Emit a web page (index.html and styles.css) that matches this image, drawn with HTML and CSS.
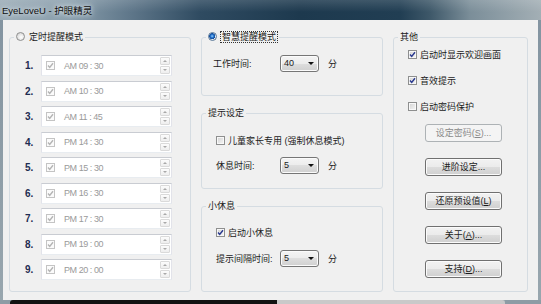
FILE: index.html
```html
<!DOCTYPE html>
<html lang="zh-CN">
<head>
    <meta charset="UTF-8">
    <title>EyeLoveU - 护眼精灵</title>
    <link rel="stylesheet" href="styles.css">
</head>
<body>
<div class="window">
    <div class="titlebar"><span class="title">EyeLoveU - 护眼精灵</span></div>

    <div class="client">
        <!-- 定时提醒模式 -->
        <fieldset class="group group-timer">
            <legend><span class="radio"></span>定时提醒模式</legend>
            <div class="group-body timer-list">
                <div class="timer-row"><span class="idx">1.</span><div class="spin"><span class="cb cb-off-gray"><svg viewBox="0 0 9 9"><path d="M2 4.6 L3.7 6.4 L7 2.2"/></svg></span><span class="time">AM 09 : 30</span><span class="spin-btns"><span class="spin-up"></span><span class="spin-down"></span></span></div></div>
                <div class="timer-row"><span class="idx">2.</span><div class="spin"><span class="cb cb-off-gray"><svg viewBox="0 0 9 9"><path d="M2 4.6 L3.7 6.4 L7 2.2"/></svg></span><span class="time">AM 10 : 30</span><span class="spin-btns"><span class="spin-up"></span><span class="spin-down"></span></span></div></div>
                <div class="timer-row"><span class="idx">3.</span><div class="spin"><span class="cb cb-off-gray"><svg viewBox="0 0 9 9"><path d="M2 4.6 L3.7 6.4 L7 2.2"/></svg></span><span class="time">AM 11 : 45</span><span class="spin-btns"><span class="spin-up"></span><span class="spin-down"></span></span></div></div>
                <div class="timer-row"><span class="idx">4.</span><div class="spin"><span class="cb cb-off-gray"><svg viewBox="0 0 9 9"><path d="M2 4.6 L3.7 6.4 L7 2.2"/></svg></span><span class="time">PM 14 : 30</span><span class="spin-btns"><span class="spin-up"></span><span class="spin-down"></span></span></div></div>
                <div class="timer-row"><span class="idx">5.</span><div class="spin"><span class="cb cb-off-gray"><svg viewBox="0 0 9 9"><path d="M2 4.6 L3.7 6.4 L7 2.2"/></svg></span><span class="time">PM 15 : 30</span><span class="spin-btns"><span class="spin-up"></span><span class="spin-down"></span></span></div></div>
                <div class="timer-row"><span class="idx">6.</span><div class="spin"><span class="cb cb-off-gray"><svg viewBox="0 0 9 9"><path d="M2 4.6 L3.7 6.4 L7 2.2"/></svg></span><span class="time">PM 16 : 30</span><span class="spin-btns"><span class="spin-up"></span><span class="spin-down"></span></span></div></div>
                <div class="timer-row"><span class="idx">7.</span><div class="spin"><span class="cb cb-off-gray"><svg viewBox="0 0 9 9"><path d="M2 4.6 L3.7 6.4 L7 2.2"/></svg></span><span class="time">PM 17 : 30</span><span class="spin-btns"><span class="spin-up"></span><span class="spin-down"></span></span></div></div>
                <div class="timer-row"><span class="idx">8.</span><div class="spin"><span class="cb cb-off-gray"><svg viewBox="0 0 9 9"><path d="M2 4.6 L3.7 6.4 L7 2.2"/></svg></span><span class="time">PM 19 : 00</span><span class="spin-btns"><span class="spin-up"></span><span class="spin-down"></span></span></div></div>
                <div class="timer-row"><span class="idx">9.</span><div class="spin"><span class="cb cb-off-gray"><svg viewBox="0 0 9 9"><path d="M2 4.6 L3.7 6.4 L7 2.2"/></svg></span><span class="time">PM 20 : 00</span><span class="spin-btns"><span class="spin-up"></span><span class="spin-down"></span></span></div></div>
            </div>
        </fieldset>

        <div class="col-mid">
            <!-- 智慧提醒模式 -->
            <fieldset class="group group-smart">
                <legend><span class="radio radio-on"></span><span class="focus">智慧提醒模式</span></legend>
                <div class="group-body">
                    <div class="field">
                        <span class="field-label">工作时间:</span>
                        <span class="combo">40<i class="caret"></i></span>
                        <span class="unit">分</span>
                    </div>
                </div>
            </fieldset>

            <fieldset class="group group-tip">
                <legend>提示设定</legend>
                <div class="group-body">
                    <label class="check-row"><span class="cb"></span>儿童家长专用 (强制休息模式)</label>
                    <div class="field">
                        <span class="field-label">休息时间:</span>
                        <span class="combo">5<i class="caret"></i></span>
                        <span class="unit">分</span>
                    </div>
                </div>
            </fieldset>

            <fieldset class="group group-rest">
                <legend>小休息</legend>
                <div class="group-body">
                    <label class="check-row"><span class="cb"><svg viewBox="0 0 9 9"><path d="M2 4.6 L3.7 6.4 L7 2.2"/></svg></span>启动小休息</label>
                    <div class="field">
                        <span class="field-label">提示间隔时间:</span>
                        <span class="combo">5<i class="caret"></i></span>
                        <span class="unit">分</span>
                    </div>
                </div>
            </fieldset>
        </div>

        <!-- 其他 -->
        <fieldset class="group group-other">
            <legend>其他</legend>
            <div class="group-body">
                <div class="check-list">
                    <label class="check-row"><span class="cb"><svg viewBox="0 0 9 9"><path d="M2 4.6 L3.7 6.4 L7 2.2"/></svg></span>启动时显示欢迎画面</label>
                    <label class="check-row"><span class="cb"><svg viewBox="0 0 9 9"><path d="M2 4.6 L3.7 6.4 L7 2.2"/></svg></span>音效提示</label>
                    <label class="check-row"><span class="cb"></span>启动密码保护</label>
                </div>
                <div class="button-list">
                    <button class="btn" disabled>设定密码(<u>S</u>)...</button>
                    <button class="btn">进阶设定...</button>
                    <button class="btn">还原预设值(<u>L</u>)</button>
                    <button class="btn">关于(<u>A</u>)...</button>
                    <button class="btn">支持(<u>D</u>)...</button>
                </div>
            </div>
        </fieldset>
    </div>

    <div class="bottom-strip">
        <span class="strip-edge"></span>
        <span class="strip-dark"></span>
        <span class="strip-light"></span>
        <span class="strip-edge strip-fill"></span>
    </div>
</div>
</body>
</html>
```

FILE: styles.css
```css
* {
    box-sizing: border-box;
}

html, body {
    width: 541px;
    height: 304px;
    margin: 0;
    padding: 0;
    overflow: hidden;
    background-color: #8d9ca5;
}

body {
    font-family: "Liberation Sans", "Noto Sans CJK SC", sans-serif;
    font-size: 9px;
    color: #1b1b1b;
}

.window {
    width: 541px;
    height: 304px;
    display: flex;
    flex-direction: column;
    background: linear-gradient(to bottom, #8293a0, #98a6ae);
}

/* 标题栏 */
.titlebar {
    flex: none;
    height: 20px;
    display: flex;
    align-items: center;
    padding-left: 2px;
    background:
        linear-gradient(to bottom, rgba(255, 255, 255, 0.14), rgba(255, 255, 255, 0) 60%),
        linear-gradient(to right, #9aabb6 0px, #889dab 70px, #5f778a 130px, #2f4b61 200px,
            #1d394e 300px, #213e53 400px, #3e5869 430px, #7b8e99 470px, #a3afb5 541px);
}

.title {
    font-size: 9.5px;
    color: #101010;
    text-shadow: 0 0 4px #e6edf1, 0 0 8px #dce5ea;
}

/* 客户区 */
.client {
    flex: none;
    height: 280px;
    margin: 0 3px;
    display: flex;
    gap: 10px;
    padding: 10px 13px 8px 6px;
    background-color: #f0f0f0;
}

.group {
    margin: 0;
    padding: 0;
    min-width: 0;
    border: 1px solid #d5dce2;
    border-radius: 3px;
}

.group legend {
    margin-left: 4px;
    padding: 0 2px;
    height: 14px;
    line-height: 14px;
    white-space: nowrap;
}

/* 定时提醒 */
.group-timer {
    width: 182px;
    flex: none;
}

.timer-list {
    display: flex;
    flex-direction: column;
    gap: 4.5px;
    padding: 11px 18px 10px 15px;
}

.timer-row {
    display: flex;
    align-items: center;
    height: 21px;
}

.idx {
    width: 16px;
    font-size: 10px;
    font-weight: bold;
    color: #1f2d52;
}

.spin {
    width: 131px;
    height: 21px;
    display: flex;
    align-items: center;
    padding: 0 1px 0 4px;
    background-color: #fff;
    border: 1px solid #e2e3ea;
    border-top-color: #c9ccd2;
    border-bottom-color: #e8ecf0;
}

.time {
    margin-left: 6px;
    color: #9a9a9a;
    letter-spacing: -0.45px;
}

.spin-btns {
    margin-left: auto;
    display: flex;
    flex-direction: column;
    gap: 1px;
}

.spin-up, .spin-down {
    position: relative;
    width: 10px;
    height: 8px;
    border: 1px solid #dadada;
    border-radius: 1px;
    background: linear-gradient(#fcfcfc, #eeeeee);
}

.spin-up::after, .spin-down::after {
    content: "";
    position: absolute;
    left: 2px;
    top: 2px;
    border-left: 2px solid transparent;
    border-right: 2px solid transparent;
}

.spin-up::after {
    border-bottom: 2px solid #a8a8a8;
}

.spin-down::after {
    border-top: 2px solid #a8a8a8;
}

/* 单选 / 复选框 */
.radio {
    display: inline-block;
    vertical-align: -1px;
    width: 9px;
    height: 9px;
    margin-right: 4px;
    border: 1px solid #8e8f8f;
    border-radius: 50%;
    background: radial-gradient(circle at 60% 60%, #ffffff 0, #e6e6e6 3px, #d2d2d2 5px);
}

.radio-on {
    border-color: #5a7898;
    background: radial-gradient(circle at 45% 45%, #9bd4ff 0, #2a78d0 1.5px, #114a98 2.8px, #e9eef3 3.2px, #c9d3dc 5px);
}

.focus {
    outline: 1px dotted #333;
    padding: 0 1px;
}

.cb {
    display: inline-flex;
    align-items: center;
    justify-content: center;
    flex: none;
    width: 9px;
    height: 9px;
    margin-right: 3px;
    border: 1px solid #8e8f8f;
    background: linear-gradient(135deg, #d2d2d2, #f6f6f6);
    box-shadow: inset 0 0 0 1px #f8f8f8;
}

.cb svg {
    width: 9px;
    height: 9px;
    flex: none;
    fill: none;
    stroke: #27378f;
    stroke-width: 1.4;
}

.cb-off-gray {
    border-color: #c4c4c4;
    background: #fbfbfb;
    box-shadow: none;
}

.cb-off-gray svg {
    stroke: #b4b4b4;
}

.check-row {
    display: flex;
    align-items: center;
    height: 14px;
    white-space: nowrap;
}

/* 中间列 */
.col-mid {
    width: 182px;
    flex: none;
    display: flex;
    flex-direction: column;
    gap: 10px;
}

.group-smart .group-body {
    padding: 11px 0 23px 11px;
}

.group-smart .field-label {
    width: 67px;
}

.group-tip .group-body {
    padding: 13px 0 14px 14px;
}

.group-rest {
    flex: 1;
}

.group-rest .group-body {
    padding: 12px 0 0 14px;
}

.group-tip .field {
    margin-top: 10px;
}

.group-rest .field {
    margin-top: 11px;
}

.field {
    display: flex;
    align-items: center;
    height: 17px;
}

.field-label {
    width: 64px;
    white-space: nowrap;
}

.combo {
    position: relative;
    width: 39px;
    height: 17px;
    line-height: 15px;
    padding-left: 3px;
    border: 1px solid #767676;
    border-radius: 3px;
    background: linear-gradient(#f4f4f4 0%, #ececec 50%, #dedede 50%, #d0d0d0 100%);
    box-shadow: inset 0 0 0 1px #fbfbfb;
}

.caret {
    position: absolute;
    right: 4px;
    top: 6px;
    border-left: 3px solid transparent;
    border-right: 3px solid transparent;
    border-top: 3px solid #111;
}

.unit {
    margin-left: 9px;
}

/* 其他 */
.group-other {
    width: 135px;
    flex: none;
}

.group-other .group-body {
    padding: 3px 0 0 14px;
}

.check-list {
    display: flex;
    flex-direction: column;
    gap: 12px;
}

.button-list {
    display: flex;
    flex-direction: column;
    gap: 16px;
    margin: 11px 0 0 17px;
}

.btn {
    width: 77px;
    height: 18px;
    padding: 0;
    font: inherit;
    line-height: 16px;
    color: #1b1b1b;
    text-align: center;
    border: 1px solid #707070;
    border-radius: 3px;
    background: linear-gradient(#f2f2f2 0%, #ebebeb 50%, #dddddd 50%, #cfcfcf 100%);
    box-shadow: inset 0 0 0 1px #fbfbfb;
}

.btn:disabled {
    color: #8a8a8a;
    border-color: #adb2b5;
    background: #f4f4f4;
    box-shadow: none;
}

.btn u {
    text-underline-offset: 1px;
}

/* 底部 */
.bottom-strip {
    flex: none;
    height: 4px;
    display: flex;
}

.strip-edge {
    width: 10px;
    background-color: #8d9ca5;
}

.strip-dark {
    width: 267px;
    background-color: #121212;
    border-top-left-radius: 3px;
}

.strip-light {
    width: 228px;
    background-color: #c9c9c9;
    border-top-right-radius: 3px;
}

.strip-fill {
    flex: 1;
}
```
